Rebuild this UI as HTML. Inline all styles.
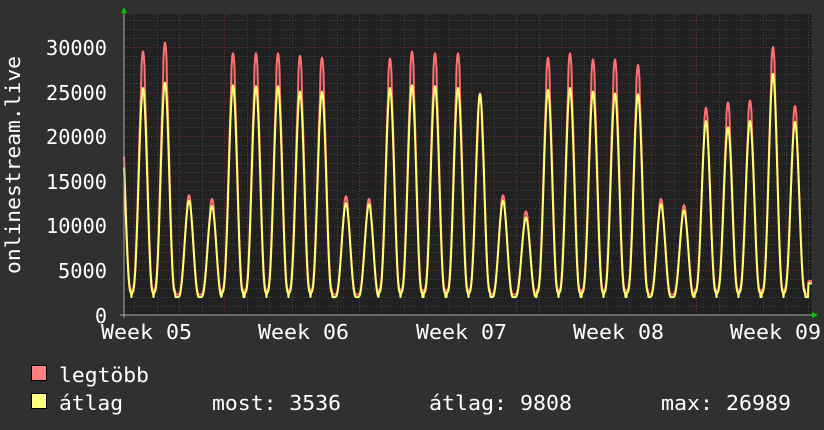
<!DOCTYPE html>
<html><head><meta charset="utf-8"><style>
html,body{margin:0;padding:0;background:#303030;width:824px;height:430px;overflow:hidden}
svg{display:block}
text{font-family:"DejaVu Sans Mono","Liberation Mono",monospace;fill:#fff;font-size:20px}
</style></head><body>
<svg id="s" width="824" height="430" xmlns="http://www.w3.org/2000/svg">
<rect x="0" y="0" width="824" height="430" fill="#303030"/>
<rect x="124" y="14" width="688" height="301" fill="#212121"/>
<g id="grid"></g>
<g id="data"></g>
<line x1="124" y1="12" x2="124" y2="318" stroke="#aaa" stroke-width="1"/>
<line x1="120" y1="315" x2="816" y2="315" stroke="#aaa" stroke-width="1"/>
<polygon points="121,13 127,13 124,7" fill="#0c0"/>
<polygon points="812,312 812,318 818,315" fill="#0c0"/>
<text x="46" y="55" textLength="61" lengthAdjust="spacingAndGlyphs">30000</text>
<text x="46" y="100" textLength="61" lengthAdjust="spacingAndGlyphs">25000</text>
<text x="46" y="144" textLength="61" lengthAdjust="spacingAndGlyphs">20000</text>
<text x="46" y="189" textLength="61" lengthAdjust="spacingAndGlyphs">15000</text>
<text x="46" y="233" textLength="61" lengthAdjust="spacingAndGlyphs">10000</text>
<text x="58" y="278" textLength="49" lengthAdjust="spacingAndGlyphs">5000</text>
<text x="95" y="323" textLength="12" lengthAdjust="spacingAndGlyphs">0</text>
<text x="101" y="339" textLength="91" lengthAdjust="spacingAndGlyphs">Week 05</text>
<text x="258" y="339" textLength="91" lengthAdjust="spacingAndGlyphs">Week 06</text>
<text x="416" y="339" textLength="91" lengthAdjust="spacingAndGlyphs">Week 07</text>
<text x="573" y="339" textLength="91" lengthAdjust="spacingAndGlyphs">Week 08</text>
<text x="730" y="339" textLength="91" lengthAdjust="spacingAndGlyphs">Week 09</text>
<text transform="translate(20,165) rotate(-90)" text-anchor="middle" textLength="218" lengthAdjust="spacingAndGlyphs">onlinestream.live</text>
<rect x="31.5" y="365.5" width="15" height="15" fill="#ff8080" stroke="#000"/>
<rect x="31.5" y="393.5" width="15" height="15" fill="#ffff80" stroke="#000"/>
<text x="59" y="382" textLength="90" lengthAdjust="spacingAndGlyphs">legtöbb</text>
<text x="59" y="410" textLength="64" lengthAdjust="spacingAndGlyphs">átlag</text>
<text x="212" y="410" textLength="129" lengthAdjust="spacingAndGlyphs">most: 3536</text>
<text x="429" y="410" textLength="143" lengthAdjust="spacingAndGlyphs">átlag: 9808</text>
<text x="661" y="410" textLength="130" lengthAdjust="spacingAndGlyphs">max: 26989</text>
</svg>
<script>
var NS="http://www.w3.org/2000/svg";
var g=document.getElementById('grid'),d=document.getElementById('data');
function ln(x1,y1,x2,y2,c){var l=document.createElementNS(NS,'line');l.setAttribute('x1',x1);l.setAttribute('y1',y1);l.setAttribute('x2',x2);l.setAttribute('y2',y2);l.setAttribute('stroke',c);l.setAttribute('stroke-dasharray','1,2');l.setAttribute('stroke-width','1');g.appendChild(l);}
function Y(v){return 315-v*268/30000;}
for(var v=1000;v<=33000;v+=1000){var y=Math.round(Y(v))+0.5;if(y<14)break;ln(124,y,812,y,v%5000==0?'#7a3030':'#444');}
for(var x=134.3;x<812;x+=22.47){var xx=Math.round(x)+0.5;var major=false;for(var k=0;k<5;k++){if(Math.abs(x-(224.3+k*157.3))<3)major=true;}ln(xx,14,xx,315,major?'#7a3030':'#444');}
var px=[143,165,189,212,233,256,278,300,322,346,369,390,412,435,458,480,503,526,548,570,593,615,638,661,684,706,728,750,773,795];
var rp=[29500,30500,13400,13000,29300,29300,29300,29000,28800,13300,13000,28700,29500,29300,29300,24800,13400,11600,28800,29300,28600,28600,28000,13000,12300,23200,23800,24000,30000,23400];
var yp=[25400,26000,12800,12200,25700,25600,25600,25000,25000,12500,12400,25400,25700,25600,25400,24700,12800,10900,25200,25400,25000,24800,24700,12400,11700,21700,21000,21700,26989,21600];
function val(x,arr,red){
  var best=0;
  for(var i=-1;i<px.length;i++){
    var p=i<0?121:px[i],P=i<0?(red?24000:21000):arr[i];
    var low=(P<15000)?2000:2500; if(red)low+=300;
    var dx=x-p; var L=11,R=10; if(dx<-L||dx>R)continue;
    var s;
    if(dx<0){s=Math.pow((1+Math.cos(Math.PI*dx/L))/2,1.4);}
    else{s=Math.pow((1+Math.cos(Math.PI*dx/R))/2,1.2);}
    if(red&&Math.abs(dx)>1.5)s*=0.93;
    var v=low+(P-low)*s; if(v>best)best=v;
  }
  if(best<2000)best=red?2300:2000;
  if(x>808)best=red?3800:3536;
  return best;
}
function path(arr,red,col){
  var s='';for(var x=124;x<=812;x+=0.5){s+=(s?'L':'M')+x.toFixed(1)+','+Y(val(x,arr,red)).toFixed(1);}
  var p=document.createElementNS(NS,'path');p.setAttribute('d',s);p.setAttribute('fill','none');p.setAttribute('stroke',col);p.setAttribute('stroke-width','2');p.setAttribute('stroke-linejoin','round');d.appendChild(p);
}
path(rp,true,'#ff7070');
path(yp,false,'#ffff70');
</script>
</body></html>
